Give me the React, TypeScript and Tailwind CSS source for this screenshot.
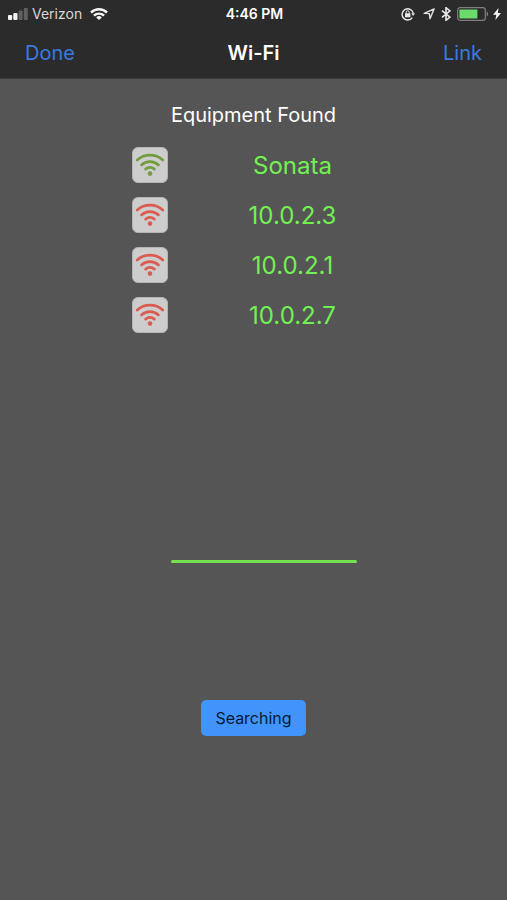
import React from "react";

type Equipment = {
  name: string;
  linked: boolean;
};

const EQUIPMENT: Equipment[] = [
  { name: "Sonata", linked: true },
  { name: "10.0.2.3", linked: false },
  { name: "10.0.2.1", linked: false },
  { name: "10.0.2.7", linked: false },
];

const Signal = () => (
  <svg className="w-5 h-3" viewBox="0 0 20 12" aria-hidden="true">
    <rect x="0" y="7" width="4.2" height="5" rx="1" fill="#f4f4f4" />
    <rect x="5.3" y="5" width="4.2" height="7" rx="1" fill="#f4f4f4" />
    <rect x="10.6" y="2.6" width="4" height="9.4" rx="1" fill="#606060" />
    <rect x="15.8" y="0" width="4" height="12" rx="1" fill="#606060" />
  </svg>
);

const StatusWifi = () => (
  <svg
    className="w-[18px] h-3"
    viewBox="0 0 18 12"
    fill="none"
    stroke="#f4f4f4"
    strokeWidth="2.4"
    aria-hidden="true"
  >
    <path d="M1 4.6a11.3 11.3 0 0 1 16 0" />
    <path d="M3.9 7.7a7.2 7.2 0 0 1 10.2 0" />
    <path d="M9 12 6.2 9.4a4 4 0 0 1 5.6 0Z" fill="#f4f4f4" stroke="none" />
  </svg>
);

const RotationLock = () => (
  <svg className="w-[14px] h-[14px]" viewBox="0 0 14 14" fill="none" aria-hidden="true">
    <path
      d="M11.3 10.6A5.6 5.6 0 1 1 12.2 6.2"
      stroke="#e8e8e8"
      strokeWidth="1.4"
    />
    <path d="M10.2 6.2h3.8l-1.9 2.9Z" fill="#e8e8e8" />
    <rect x="4" y="6.2" width="5.4" height="4" rx="0.5" fill="#e8e8e8" />
    <path d="M5.2 6.5V5.2a1.5 1.5 0 0 1 3 0v1.3" stroke="#e8e8e8" strokeWidth="1" />
  </svg>
);

const LocationArrow = () => (
  <svg className="w-3 h-3" viewBox="0 0 12 12" aria-hidden="true">
    <path
      d="M11.1.9 7 10.8 6.4 5.6 1.2 5.4Z"
      fill="none"
      stroke="#e0e0e0"
      strokeWidth="1.4"
      strokeLinejoin="round"
    />
  </svg>
);

const Bluetooth = () => (
  <svg className="w-[10px] h-[14px]" viewBox="0 0 10 14" aria-hidden="true">
    <path
      d="m1 3.7 8 6.4-4 3.2V.7l4 3.2-8 6.4"
      fill="none"
      stroke="#e8e8e8"
      strokeWidth="1.6"
    />
  </svg>
);

const Battery = () => (
  <svg className="w-8 h-[14px]" viewBox="0 0 32 14" aria-hidden="true">
    <rect
      x="0.7"
      y="0.7"
      width="27.6"
      height="12.6"
      rx="2.4"
      fill="none"
      stroke="#808080"
      strokeWidth="1.2"
    />
    <rect x="2.4" y="2.4" width="18" height="9.2" rx="0.8" fill="#6bdb6a" />
    <path d="M29.6 4.6c2 .6 2 4.2 0 4.8Z" fill="#808080" />
  </svg>
);

const Bolt = () => (
  <svg className="w-2 h-3" viewBox="0 0 8 12" aria-hidden="true">
    <path d="M5.6 0 0 6.8h3.3L2.4 12 8 5.1H4.8Z" fill="#f4f4f4" />
  </svg>
);

const EquipmentIcon = ({ linked }: { linked: boolean }) => (
  <span
    className={
      "flex items-center justify-center w-9 h-9 rounded-md border bg-[#cdcdcd] border-[#b4b4b4] " +
      (linked ? "text-[#739c3e]" : "text-[#dc5b50]")
    }
  >
    <svg
      className="w-[30px] h-6"
      viewBox="0 0 30 24"
      fill="none"
      stroke="currentColor"
      strokeWidth="2.7"
      strokeLinecap="round"
      aria-hidden="true"
    >
      <path d="M2.2 7C9.4.6 20.6.6 27.8 7" />
      <path d="M6.5 11.9c5-4.5 12-4.5 17 0" />
      <path d="M10.6 16.1c2.6-2.1 6.2-2.1 8.8 0" />
      <circle cx="15" cy="20.6" r="2.3" fill="currentColor" stroke="none" />
    </svg>
  </span>
);

const App = () => {
  return (
    <div className="flex flex-col min-h-screen bg-[#555555] font-['Inter',sans-serif]">
      <header className="bg-[#2b2b2b] border-b border-[#3c3c3c] text-white">
        <div className="grid grid-cols-[1fr_auto_1fr] items-center h-7 pl-2 pr-1.5">
          <div className="flex items-center">
            <Signal />
            <span className="ml-1 mr-2 text-[14px] leading-5 text-[#d8d8d8]">
              Verizon
            </span>
            <StatusWifi />
          </div>
          <span className="text-[14px] leading-5 font-semibold">4:46 PM</span>
          <div className="flex items-center justify-end">
            <RotationLock />
            <span className="ml-2 mr-1.5">
              <LocationArrow />
            </span>
            <Bluetooth />
            <span className="ml-1.5 mr-1">
              <Battery />
            </span>
            <Bolt />
          </div>
        </div>
        <nav className="grid grid-cols-[1fr_auto_1fr] items-center h-[50px] px-[25px] text-[20px] leading-6">
          <button type="button" className="justify-self-start text-[#3b7ae0]">
            Done
          </button>
          <h1 className="font-semibold">Wi-Fi</h1>
          <button type="button" className="justify-self-end text-[#3b7ae0]">
            Link
          </button>
        </nav>
      </header>

      <main className="flex flex-col items-center pt-6 pb-10">
        <h2 className="text-[20px] leading-6 text-white">Equipment Found</h2>

        <ul className="flex flex-col gap-3.5 w-[244px] mt-5">
          {EQUIPMENT.map((item) => (
            <li key={item.name} className="flex items-center justify-between h-9">
              <EquipmentIcon linked={item.linked} />
              <span className="w-[166px] pt-0.5 text-center text-[24px] leading-8 text-[#73f153]">
                {item.name}
              </span>
            </li>
          ))}
        </ul>

        <div className="w-[186px] h-[3px] ml-5 mt-[227px] rounded-full bg-[#73e04f]" />

        <button
          type="button"
          className="w-[105px] h-9 mt-[137px] rounded-[5px] bg-[#4094fb] text-[16px] leading-5 text-[#071a33]"
        >
          Searching
        </button>
      </main>
    </div>
  );
};

export default App;
